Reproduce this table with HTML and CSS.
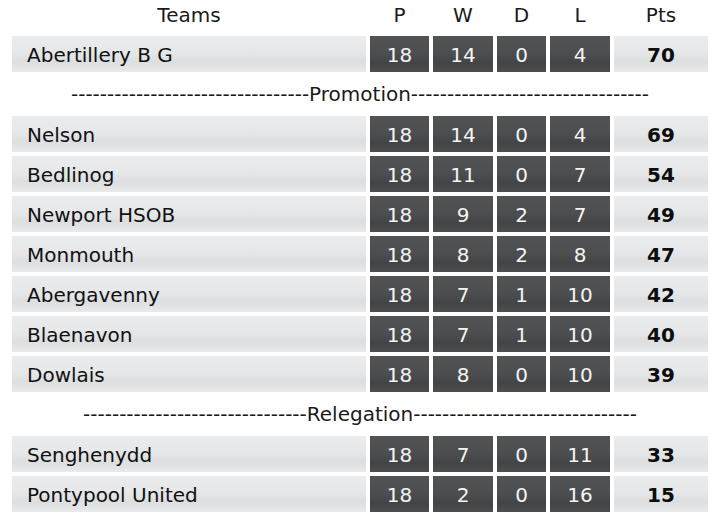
FILE: index.html
```html
<!DOCTYPE html>
<html>
<head>
<meta charset="utf-8">
<link rel="stylesheet" href="styles.css">
</head>
<body>
<div class="standings">
  <div class="row head">
    <div class="hcell">Teams</div><div class="hcell">P</div><div class="hcell">W</div><div class="hcell">D</div><div class="hcell">L</div><div class="hcell">Pts</div>
  </div>
  <div class="row">
    <div class="team">Abertillery B G</div><div class="num">18</div><div class="num">14</div><div class="num">0</div><div class="num">4</div><div class="pts">70</div>
  </div>
  <div class="divider">---------------------------------Promotion---------------------------------</div>
  <div class="row">
    <div class="team">Nelson</div><div class="num">18</div><div class="num">14</div><div class="num">0</div><div class="num">4</div><div class="pts">69</div>
  </div>
  <div class="row">
    <div class="team">Bedlinog</div><div class="num">18</div><div class="num">11</div><div class="num">0</div><div class="num">7</div><div class="pts">54</div>
  </div>
  <div class="row">
    <div class="team">Newport HSOB</div><div class="num">18</div><div class="num">9</div><div class="num">2</div><div class="num">7</div><div class="pts">49</div>
  </div>
  <div class="row">
    <div class="team">Monmouth</div><div class="num">18</div><div class="num">8</div><div class="num">2</div><div class="num">8</div><div class="pts">47</div>
  </div>
  <div class="row">
    <div class="team">Abergavenny</div><div class="num">18</div><div class="num">7</div><div class="num">1</div><div class="num">10</div><div class="pts">42</div>
  </div>
  <div class="row">
    <div class="team">Blaenavon</div><div class="num">18</div><div class="num">7</div><div class="num">1</div><div class="num">10</div><div class="pts">40</div>
  </div>
  <div class="row">
    <div class="team">Dowlais</div><div class="num">18</div><div class="num">8</div><div class="num">0</div><div class="num">10</div><div class="pts">39</div>
  </div>
  <div class="divider">-------------------------------Relegation-------------------------------</div>
  <div class="row">
    <div class="team">Senghenydd</div><div class="num">18</div><div class="num">7</div><div class="num">0</div><div class="num">11</div><div class="pts">33</div>
  </div>
  <div class="row">
    <div class="team">Pontypool United</div><div class="num">18</div><div class="num">2</div><div class="num">0</div><div class="num">16</div><div class="pts">15</div>
  </div>
</div>
</body>
</html>
```
FILE: styles.css
```css
html, body {
  margin: 0;
  padding: 0;
  background: #ffffff;
}

.standings {
  display: grid;
  row-gap: 4px;
  padding: 0 12px;
  font-family: "DejaVu Sans", Verdana, sans-serif;
  font-size: 20px;
  color: #111111;
}

.row {
  display: grid;
  grid-template-columns: 354px 59px 60px 49px 60px 94px;
  column-gap: 4px;
  height: 36px;
}

.row.head {
  height: 32px;
}

.hcell {
  display: flex;
  align-items: center;
  justify-content: center;
  padding-bottom: 2px;
  box-sizing: border-box;
  color: #1a1a1a;
}

.team, .num, .pts {
  display: flex;
  align-items: center;
  padding-top: 1px;
  box-sizing: border-box;
}

.team {
  padding-left: 15px;
  background: linear-gradient(#eaecee 0%, #e5e7e9 45%, #dcdee0 72%, #e2e4e6 86%, #e8eaec 100%);
  color: #111111;
}

.num {
  justify-content: center;
  background: linear-gradient(#525355 0%, #4c4d4f 50%, #434446 75%, #48494b 90%, #4d4e50 100%);
  color: #f4f4f4;
}

.pts {
  justify-content: center;
  font-weight: bold;
  background: linear-gradient(#eaecee 0%, #e5e7e9 45%, #dcdee0 72%, #e2e4e6 86%, #e8eaec 100%);
  color: #0d0d0d;
}

.divider {
  height: 36px;
  display: flex;
  align-items: center;
  justify-content: center;
  color: #1a1a1a;
  white-space: nowrap;
  overflow: hidden;
}
```
